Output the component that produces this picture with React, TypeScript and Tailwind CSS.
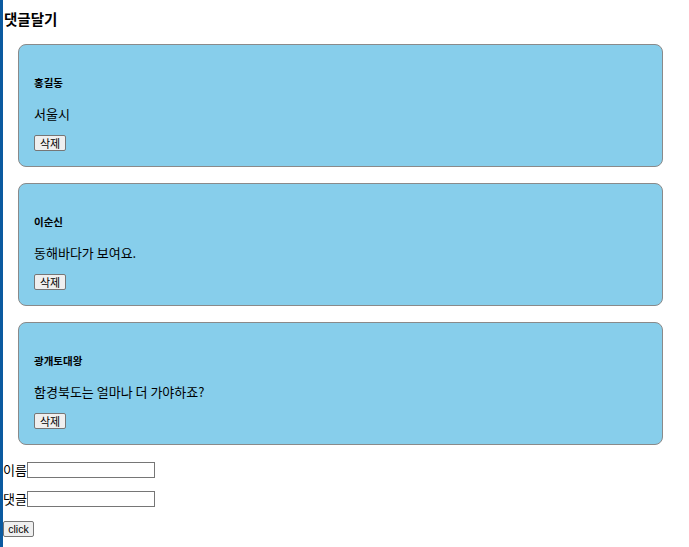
import React from "react";

const comments = [
  { name: "홍길동", text: "서울시" },
  { name: "이순신", text: "동해바다가 보여요." },
  { name: "광개토대왕", text: "함경북도는 얼마나 더 가야하죠?" },
];

const font = "font-['Malgun_Gothic','Noto_Sans_CJK_KR','Noto_Sans',sans-serif]";

export default function App() {
  return (
    <div className={`min-h-[547px] border-l-[3px] border-[#0b5aa0] bg-white text-black ${font}`}>
      <div className="pt-[10px] pl-[1px] text-[14.5px] leading-[18px] font-bold">댓글달기</div>
      <div className="mt-[16px] ml-[15px] w-[645px] flex flex-col gap-[16px]">
        {comments.map((c) => (
          <div
            key={c.name}
            className="h-[123px] rounded-[8px] border border-[#8a8a8a] bg-[#87ceeb] px-[15px] flex flex-col items-start"
          >
            <div className="mt-[31px] text-[10.5px] leading-[14px] font-bold">{c.name}</div>
            <div className="mt-[15px] text-[13px] leading-[18px]">{c.text}</div>
            <button className="mt-[12px] h-[16px] w-[32px] rounded-[2px] border border-[#767676] bg-[#efefef] text-[11px] leading-[14px] flex items-center justify-center">
              삭제
            </button>
          </div>
        ))}
      </div>
      <div className="mt-[17px] flex items-center h-[16px] text-[13px]">
        <span className="leading-[16px]">이름</span>
        <input className="h-[16px] w-[128px] border border-[#767676] bg-white outline-none" />
      </div>
      <div className="mt-[13px] flex items-center h-[16px] text-[13px]">
        <span className="leading-[16px]">댓글</span>
        <input className="h-[16px] w-[128px] border border-[#767676] bg-white outline-none" />
      </div>
      <button className="mt-[14px] h-[16px] w-[31px] rounded-[2px] border border-[#767676] bg-[#efefef] text-[10.5px] leading-[14px] flex items-center justify-center font-['Liberation_Sans',sans-serif]">
        click
      </button>
    </div>
  );
}
